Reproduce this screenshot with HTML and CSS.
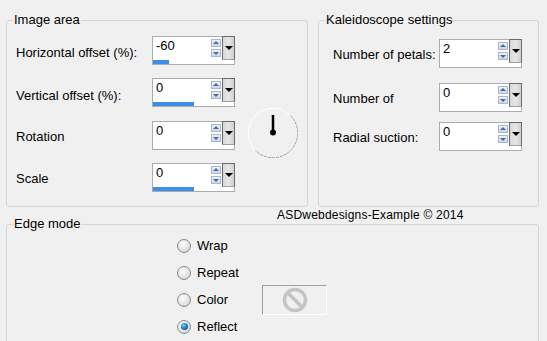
FILE: index.html
```html
<!DOCTYPE html>
<html>
<head>
<meta charset="utf-8">
<link rel="stylesheet" href="styles.css">
</head>
<body>
<div class="dialog">
  <div class="top">
    <fieldset class="group image-area">
      <legend>Image area</legend>
      <div class="fields">
        <div class="lbl">Horizontal offset (%):</div>
        <div class="spin">
          <div class="spin-main"><span class="val">-60</span><span class="arrows"><span class="arr up"></span><span class="arr down"></span></span><span class="drop"></span></div>
          <div class="track"><div class="fill" style="width:20%"></div></div>
        </div>
        <div class="lbl lower">Vertical offset (%):</div>
        <div class="spin">
          <div class="spin-main"><span class="val">0</span><span class="arrows"><span class="arr up"></span><span class="arr down"></span></span><span class="drop"></span></div>
          <div class="track"><div class="fill" style="width:50%"></div></div>
        </div>
        <div class="lbl">Rotation</div>
        <div class="spin">
          <div class="spin-main"><span class="val">0</span><span class="arrows"><span class="arr up"></span><span class="arr down"></span></span><span class="drop"></span></div>
          <div class="track"></div>
        </div>
        <div class="lbl">Scale</div>
        <div class="spin">
          <div class="spin-main"><span class="val">0</span><span class="arrows"><span class="arr up"></span><span class="arr down"></span></span><span class="drop"></span></div>
          <div class="track"><div class="fill" style="width:50%"></div></div>
        </div>
        <div class="dial">
          <svg width="50" height="50" viewBox="0 0 50 50">
            <path d="M7.5 42.5 A24 24 0 0 1 42.5 7.5" fill="none" stroke="#ffffff" stroke-width="1"/>
            <path d="M42.5 7.5 A24 24 0 0 1 7.5 42.5" fill="none" stroke="#a0a0a0" stroke-width="1" stroke-dasharray="3 1"/>
            <line x1="25" y1="7" x2="25" y2="24" stroke="#000" stroke-width="2.5"/>
            <circle cx="25" cy="24.5" r="3" fill="#000"/>
          </svg>
        </div>
      </div>
    </fieldset>
    <fieldset class="group kaleido">
      <legend>Kaleidoscope settings</legend>
      <div class="krows">
        <div class="krow r1">
          <div class="lbl">Number of petals:</div>
          <div class="spin">
            <div class="spin-main"><span class="val">2</span><span class="arrows"><span class="arr up"></span><span class="arr down"></span></span><span class="drop"></span></div>
            <div class="track"></div>
          </div>
        </div>
        <div class="krow r2">
          <div class="lbl">Number of</div>
          <div class="spin">
            <div class="spin-main"><span class="val">0</span><span class="arrows"><span class="arr up"></span><span class="arr down"></span></span><span class="drop"></span></div>
            <div class="track"></div>
          </div>
        </div>
        <div class="krow r3">
          <div class="lbl">Radial suction:</div>
          <div class="spin">
            <div class="spin-main"><span class="val">0</span><span class="arrows"><span class="arr up"></span><span class="arr down"></span></span><span class="drop"></span></div>
            <div class="track"></div>
          </div>
        </div>
      </div>
    </fieldset>
  </div>
  <div class="credit">ASDwebdesigns-Example © 2014</div>
  <fieldset class="group edge">
    <legend>Edge mode</legend>
    <div class="radios">
      <div class="radio"><span class="dot"></span>Wrap</div>
      <div class="radio r-repeat"><span class="dot"></span>Repeat</div>
      <div class="radio r-color"><span class="dot"></span>Color</div>
      <div class="swatch">
        <svg width="30" height="30" viewBox="0 0 30 30">
          <circle cx="15" cy="15" r="10.5" fill="none" stroke="#c4c4c4" stroke-width="3.5"/>
          <line x1="8" y1="8" x2="22" y2="22" stroke="#c4c4c4" stroke-width="3.5"/>
        </svg>
      </div>
      <div class="radio r-reflect"><span class="dot on"></span>Reflect</div>
    </div>
  </fieldset>
</div>
</body>
</html>
```
FILE: styles.css
```css
html, body {
  margin: 0;
  padding: 0;
  background: #f0f0f0;
}
body {
  font-family: "Liberation Sans", Arial, sans-serif;
  font-size: 13px;
  color: #000;
  width: 547px;
  height: 341px;
  overflow: hidden;
}
.dialog {
  padding: 12px 0 0 6px;
}
.top {
  display: flex;
  gap: 10px;
}
.group {
  margin: 0;
  padding: 0;
  border: 1px solid #d5d5d5;
  border-radius: 3px;
  box-sizing: border-box;
  min-width: 0;
}
.group legend {
  margin-left: 6px;
  padding: 0 1px;
  line-height: 16px;
  height: 16px;
}
.image-area {
  width: 302px;
  height: 195px;
}
.kaleido {
  width: 221px;
  height: 195px;
}
.fields {
  display: grid;
  grid-template-columns: 136px 83px auto;
  grid-template-rows: repeat(4, 29px);
  row-gap: 13.33px;
  padding: 8px 0 0 9px;
}
.lbl {
  grid-column: 1;
  align-self: center;
  padding-top: 3px;
  white-space: nowrap;
}
.lbl.lower {
  padding-top: 6px;
}
.spin {
  grid-column: 2;
  width: 83px;
  height: 29px;
  box-sizing: border-box;
  border: 1px solid #acacac;
  background: #fff;
  display: flex;
  flex-direction: column;
}
.spin-main {
  height: 22px;
  display: flex;
  align-items: flex-start;
}
.val {
  flex: 1;
  padding: 1px 0 0 3px;
  line-height: 15px;
}
.arrows {
  width: 10px;
  margin: 2px 1px 0 0;
  display: flex;
  flex-direction: column;
  gap: 2px;
}
.arr {
  height: 8px;
  box-sizing: border-box;
  border: 1px solid #a9b6cc;
  background: linear-gradient(#eef3fb, #c9d6ec);
  position: relative;
}
.arr::after {
  content: "";
  position: absolute;
  left: 1px;
  border-left: 3px solid transparent;
  border-right: 3px solid transparent;
}
.arr.up::after {
  top: 1px;
  border-bottom: 3px solid #4b6a9c;
}
.arr.down::after {
  top: 2px;
  border-top: 3px solid #4b6a9c;
}
.drop {
  width: 13px;
  height: 24px;
  margin: -1px -1px 0 0;
  box-sizing: border-box;
  border: 1px solid #6a6a6a;
  border-bottom-color: #a0a0a0;
  background: linear-gradient(90deg, #d8d8d8, #e6e6e6 50%, #cfcfcf);
  position: relative;
}
.drop::after {
  content: "";
  position: absolute;
  left: 2px;
  top: 9px;
  border-left: 4px solid transparent;
  border-right: 4px solid transparent;
  border-top: 4px solid #000;
}
.track {
  height: 5px;
  padding-top: 1px;
  box-sizing: border-box;
}
.fill {
  height: 4px;
  background: #3d8ee6;
}
.dial {
  grid-column: 3;
  grid-row: 2 / span 3;
  align-self: center;
  margin: 0 0 5px 13px;
  height: 50px;
}
.dial svg {
  display: block;
}
.krows {
  padding: 11px 0 0 14px;
  display: flex;
  flex-direction: column;
}
.krow {
  display: flex;
  align-items: center;
  height: 29px;
}
.krow .lbl {
  width: 106px;
  padding-top: 1px;
}
.krow.r2 {
  margin-top: 15px;
}
.krow.r3 {
  margin-top: 10px;
}
.credit {
  padding-left: 271px;
  font-size: 12px;
  letter-spacing: 0.2px;
  line-height: 14px;
  margin-top: 1px;
}
.edge {
  width: 533px;
  height: 140px;
  margin-top: -6px;
}
.radios {
  display: grid;
  grid-template-columns: 85px auto;
  grid-template-rows: repeat(4, 27px);
  padding: 0 0 0 170px;
}
.radio {
  grid-column: 1;
  display: flex;
  align-items: center;
  gap: 6px;
  white-space: nowrap;
}
.dot {
  width: 14px;
  height: 14px;
  border-radius: 50%;
  box-sizing: border-box;
  border: 1px solid #8a8a8a;
  background: radial-gradient(circle at 40% 35%, #ffffff 0%, #e6e6e6 50%, #c8c8c8 100%);
  position: relative;
}
.dot.on::after {
  content: "";
  position: absolute;
  left: 2.5px;
  top: 2.5px;
  width: 7px;
  height: 7px;
  border-radius: 50%;
  background: radial-gradient(circle at 40% 35%, #6fd2ff 0%, #1a82c4 45%, #0b3c66 100%);
}
.swatch {
  grid-column: 2;
  grid-row: 3;
  align-self: center;
  width: 65px;
  height: 30px;
  box-sizing: border-box;
  border: 1px solid #a0a0a0;
  border-right-color: #fff;
  border-bottom-color: #fff;
  display: flex;
  align-items: center;
  justify-content: center;
}
.swatch svg {
  display: block;
}
.r-reflect {
  grid-row: 4;
}
```
